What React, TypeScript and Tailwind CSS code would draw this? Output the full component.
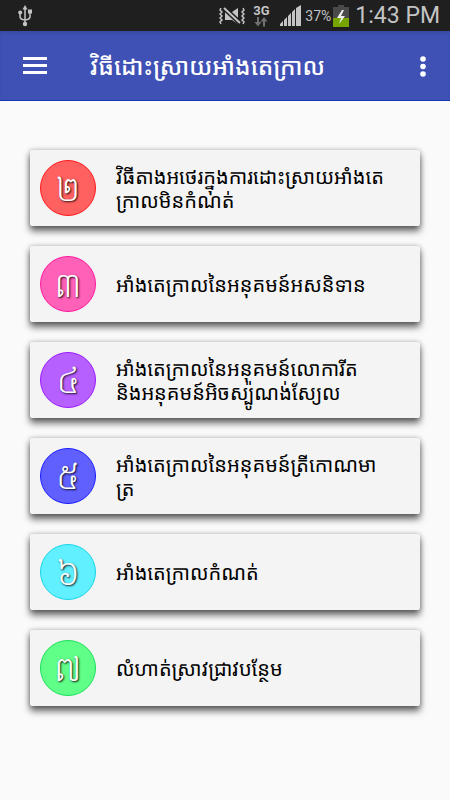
import React from 'react';

interface Lesson {
  number: string;
  lines: string[];
  circle: string;
}

const lessons: Lesson[] = [
  { number: '២', lines: ['វិធីតាងអថេរក្នុងការដោះស្រាយអាំងតេ', 'ក្រាលមិនកំណត់'], circle: 'bg-[#ff6060] border-[#ff1a1a]' },
  { number: '៣', lines: ['អាំងតេក្រាលនៃអនុគមន៍អសនិទាន'], circle: 'bg-[#ff60b8] border-[#ff1a9c]' },
  { number: '៤', lines: ['អាំងតេក្រាលនៃអនុគមន៍លោការីត', 'និងអនុគមន៍អិចស្ប៉ូណង់ស្យែល'], circle: 'bg-[#b660ff] border-[#9a1aff]' },
  { number: '៥', lines: ['អាំងតេក្រាលនៃអនុគមន៍ត្រីកោណមា', 'ត្រ'], circle: 'bg-[#6060ff] border-[#1a1aff]' },
  { number: '៦', lines: ['អាំងតេក្រាលកំណត់'], circle: 'bg-[#60f0ff] border-[#1ad4e8]' },
  { number: '៧', lines: ['លំហាត់ស្រាវជ្រាវបន្ថែម'], circle: 'bg-[#60ff88] border-[#1ae05a]' },
];

const StatusBar: React.FC = () => (
  <div className="flex h-[31px] items-center bg-[#1f1f1f] pr-[10px] pl-[18px] text-[#c4c4c4]">
    {/* USB */}
    <svg className="h-[22px] w-[14px]" viewBox="0 0 14 22" fill="none" stroke="currentColor" strokeWidth="1.5">
      <path d="M7 3v16M2 8v3.500q0 3 5 3.500M12 7v4.500q0 3-5 3.500" />
      <path d="M7 0l2.500 4.500h-5z" fill="currentColor" stroke="none" />
      <circle cx="2.200" cy="7.500" r="2" fill="currentColor" stroke="none" />
      <circle cx="7" cy="19" r="2.200" fill="currentColor" stroke="none" />
      <path d="M10 4.500h4v4h-4z" fill="currentColor" stroke="none" />
    </svg>

    <div className="ml-auto flex items-center">
      {/* Vibrate, sound off */}
      <svg className="h-[18px] w-[26px]" viewBox="0 0 26 18" fill="none" stroke="currentColor">
        <path d="M2 1l-1 2 2 2-2 2 2 2-2 2 2 2-2 2 1 2M24 1l1 2-2 2 2 2-2 2 2 2-2 2 2 2-1 2" strokeWidth="1.500" />
        <path d="M6 5h7l6-4v16l-6-4H6z" fill="currentColor" stroke="none" />
        <path d="M5 1l16 15" stroke="#1f1f1f" strokeWidth="5" />
        <path d="M5 1l16 15" strokeWidth="2" />
      </svg>
      <div className="ml-2 flex w-4 flex-col items-center">
        <span className="font-[Roboto,sans-serif] text-[13px] leading-[12px] font-bold">3G</span>
        <svg className="h-[10px] w-[14px]" viewBox="0 0 14 10" fill="#707070">
          <path d="M3 0h2v5h2.500L4 9.500.5 5H3zM9 9.500h2v-5h2.500L10 0 6.500 4.500H9z" />
        </svg>
      </div>
      {/* Signal strength */}
      <svg className="ml-[11px] h-[21px] w-[21px]" viewBox="0 0 21 21" fill="currentColor">
        <path d="M0 21v-2l3-3v5zM4 21v-6l3-3v9zM8 21V11l3-3v13zM12 21V7l3-3v17zM16 21V3l5-3v21z" />
      </svg>
      <span className="ml-1 font-[Roboto,sans-serif] text-sm">37%</span>
      {/* Battery, charging */}
      <svg className="ml-[2px] h-[22px] w-4" viewBox="0 0 16 22">
        <path d="M5 0h6v2h5v20H0V2h5z" fill="#4a4a4a" />
        <path d="M0 13h16v9H0z" fill="#76a500" />
        <path d="M9 5L4 13h4l-2 6 6-8H8l3-6z" fill="#f0f0f0" />
      </svg>
      <time className="ml-[6px] font-[Roboto,sans-serif] text-[23px] leading-[31px]">1:43 PM</time>
    </div>
  </div>
);

const Header: React.FC = () => (
  <header className="flex h-[70px] items-center border-b border-[#0f38b4] bg-[#3f51b5] pr-[13px] pl-[23px] text-white shadow-[inset_0_3px_3px_rgba(0,0,0,0.08)]">
    <button type="button" aria-label="Menu" className="h-6 w-6">
      <svg className="h-6 w-6" viewBox="0 0 24 24" fill="currentColor">
        <path d="M0 3h24v3H0zM0 10h24v3H0zM0 17h24v3H0z" />
      </svg>
    </button>
    <h1 className="ml-[43px] text-[24px] leading-[36px] font-medium whitespace-nowrap">វិធីដោះស្រាយអាំងតេក្រាល</h1>
    <button type="button" aria-label="More options" className="ml-auto h-6 w-7">
      <svg className="h-6 w-7" viewBox="0 0 28 24" fill="currentColor">
        <circle cx="14" cy="5" r="2.800" />
        <circle cx="14" cy="12.500" r="2.800" />
        <circle cx="14" cy="20" r="2.800" />
      </svg>
    </button>
  </header>
);

const LessonCard: React.FC<{ lesson: Lesson }> = ({ lesson }) => (
  <li>
    <button
      type="button"
      className="flex h-[76px] w-full items-center rounded-[2px] bg-[#f4f4f4] pl-[10px] text-left shadow-[0_5px_7px_rgba(0,0,0,0.6),0_0_5px_rgba(0,0,0,0.25)]"
    >
      <span
        className={`flex h-14 w-14 shrink-0 items-center justify-center rounded-full border pt-[2px] font-['Noto_Serif_Khmer','Khmer_OS','Noto_Sans_Khmer',serif] text-[32px] leading-[32px] font-light text-white [text-shadow:1px_1px_2px_rgba(0,0,0,0.9)] ${lesson.circle}`}
      >
        {lesson.number}
      </span>
      <span className="ml-5 pt-[2px] text-[20px] leading-6 whitespace-nowrap text-black">
        {lesson.lines.map((line) => (
          <span key={line} className="block">{line}</span>
        ))}
      </span>
    </button>
  </li>
);

export default function App() {
  return (
    <div className="min-h-screen bg-[#fafafa] font-['Noto_Sans_Khmer','Khmer_OS','Noto_Sans','DejaVu_Sans',sans-serif]">
      <StatusBar />
      <Header />
      <main className="px-[30px] pt-[49px] pb-10">
        <ul className="flex flex-col gap-5">
          {lessons.map((lesson) => (
            <LessonCard key={lesson.number} lesson={lesson} />
          ))}
        </ul>
      </main>
    </div>
  );
}
